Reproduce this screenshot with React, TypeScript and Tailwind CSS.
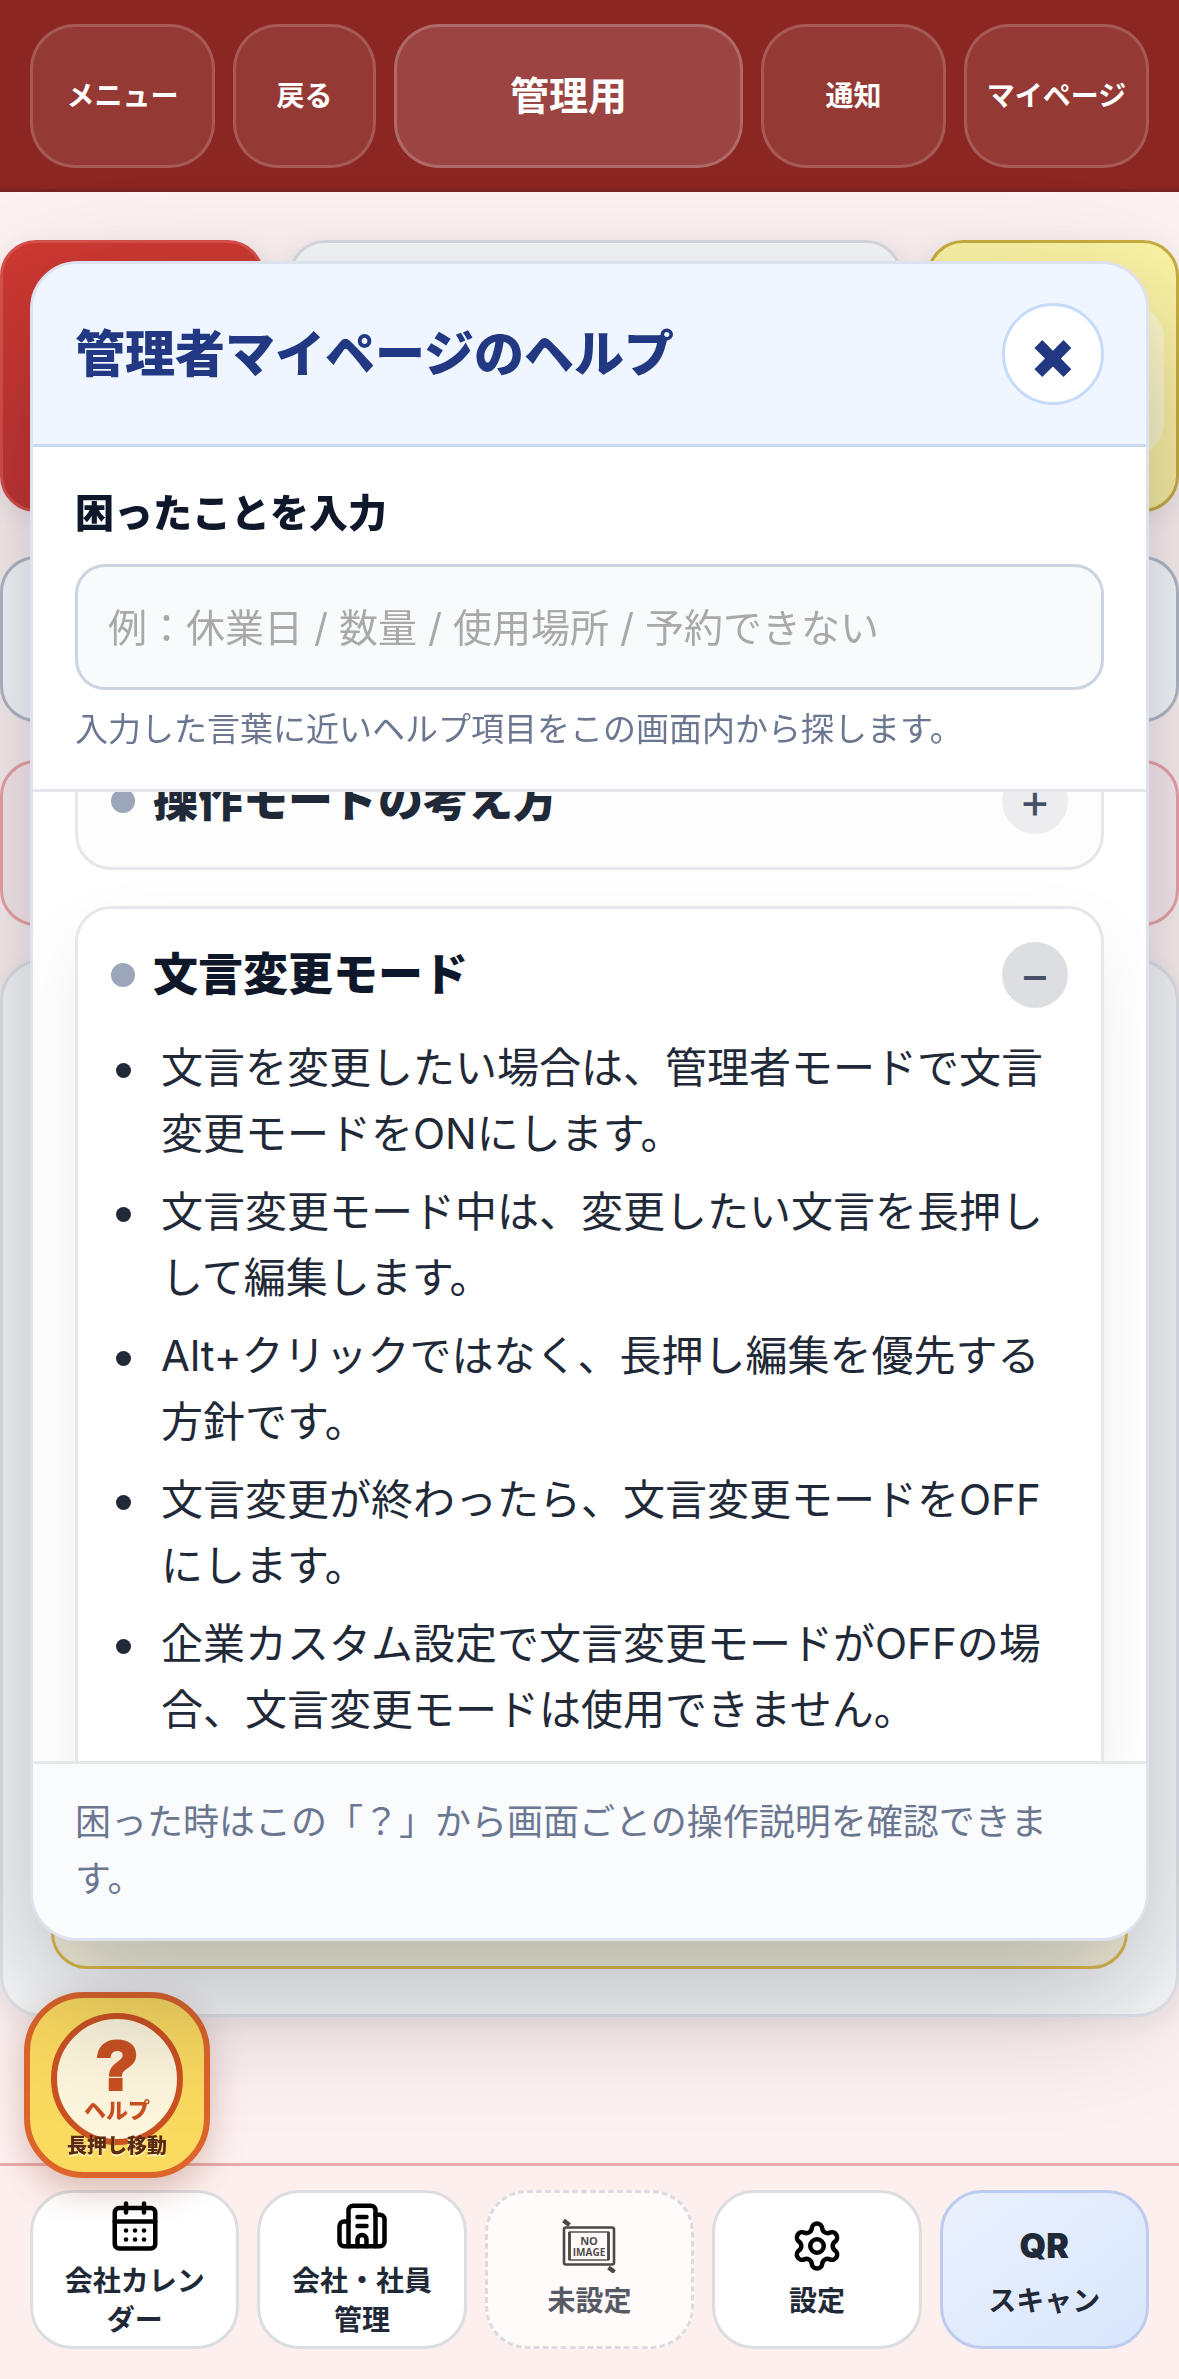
import { useLayoutEffect, useRef, useState } from 'react';
import { Building2, CalendarDays, Settings } from 'lucide-react';

const helpItems = [
    { title: '操作モードの考え方', lines: [] as string[] },
    {
        title: '文言変更モード',
        lines: [
            '文言を変更したい場合は、管理者モードで文言変更モードをONにします。',
            '文言変更モード中は、変更したい文言を長押しして編集します。',
            'Alt+クリックではなく、長押し編集を優先する方針です。',
            '文言変更が終わったら、文言変更モードをOFFにします。',
            '企業カスタム設定で文言変更モードがOFFの場合、文言変更モードは使用できません。',
        ],
    },
];

function NoImageIcon() {
    return (
        <svg viewBox="0 0 54 54" className="size-[54px]" fill="none" stroke="#111" aria-hidden="true">
            <rect x="2" y="8.500" width="50" height="37" rx="2" strokeWidth="2.6" />
            <rect x="7.500" y="13" width="39" height="28" strokeWidth="1.4" />
            <path d="M7.500 13v28M46.500 13v28" strokeWidth="2.8" />
            <path d="M1.500 1.500 7.500 6M46.500 48.500l6 4.500" strokeWidth="4.5" />
            <text x="27" y="26" textAnchor="middle" fill="#111" stroke="none" className="font-['Open_Sans'] text-[11px] font-bold">NO</text>
            <text x="27" y="37" textAnchor="middle" fill="#111" stroke="none" className="font-['Open_Sans'] text-[10px] font-bold">IMAGE</text>
        </svg>
    );
}

function Header() {
    const button = 'rounded-[45px] border-[3px] border-white/16 bg-white/9 text-[28px] font-semibold text-white';
    return (
        <header className="grid h-[192px] grid-cols-[185px_143px_1fr_185px_185px] gap-[18px] border-b-[3px] border-[#7a2320] bg-[#8b2622] px-[30px] pt-6 pb-[21px]">
            <button className={button}>メニュー</button>
            <button className={button}>戻る</button>
            <button className="rounded-[45px] border-[3px] border-white/20 bg-white/14 text-[39px] font-bold text-white">管理用</button>
            <button className={button}>通知</button>
            <button className={button}>マイページ</button>
        </header>
    );
}

// Page behind the dialog, only its edges are visible
function Backdrop() {
    return (
        <main className="pt-[48px]">
            <div className="grid grid-cols-[264px_1fr_252px] gap-[25px]">
                <div className="h-[272px] rounded-[36px] border-[3px] border-[#d8504c] bg-linear-to-b from-[#cf3932] to-[#c53430] shadow-[0_6px_24px_rgba(15,23,42,0.08)]" />
                <div className="rounded-[36px] border-[3px] border-[#d9dbdf] bg-[#f7f8f9] shadow-[0_6px_24px_rgba(15,23,42,0.08)]" />
                <div className="rounded-[36px] border-[3px] border-[#c9ac3f] bg-linear-to-b from-[#fbf3a4] to-[#f8eda0] px-3 pt-[60px] pb-[51px] shadow-[0_6px_24px_rgba(15,23,42,0.08)]">
                    <div className="h-full rounded-[36px] bg-white/40" />
                </div>
            </div>
            <div className="mt-[44px] h-[166px] rounded-[36px] border-[3px] border-[#b4bac8] bg-[#f8fafc]" />
            <div className="mt-[38px] h-[166px] rounded-[36px] border-[3px] border-[#eea5a8] bg-[#fcecef]" />
            <div className="mt-[33px] flex h-[1058px] flex-col justify-end rounded-[42px] border-[3px] border-[#e2e4e9] bg-[#f8f9fa] px-12 pb-[45px] shadow-[0_6px_24px_rgba(15,23,42,0.06)]">
                <div className="h-[240px] rounded-[36px] border-[3px] border-[#e0bd48] bg-[#f7f2dc]" />
            </div>
        </main>
    );
}

function HelpButton() {
    return (
        <button className="fixed bottom-[201px] left-6 flex size-[186px] flex-col items-center rounded-[60px] border-[6px] border-[#dd642b] bg-[#fbda60] pt-[15px] shadow-[0_12px_36px_rgba(124,45,18,0.28)]">
            <span className="flex size-[132px] shrink-0 flex-col items-center justify-center rounded-full border-[6px] border-[#cb5122] bg-[#fdf5dc] text-[#c95022]">
                <span className="font-['Liberation_Sans',sans-serif] text-[69px] leading-[63px] font-bold [-webkit-text-stroke:4px_#c95022]">?</span>
                <span className="text-[22px] leading-[27px] font-black">ヘルプ</span>
            </span>
            <span className="-mt-[11px] text-[20px] leading-6 font-black text-[#5c2a10] [text-shadow:0_2px_0_#fff3b8]">長押し移動</span>
        </button>
    );
}

function BottomNav() {
    const item = 'flex flex-col items-center justify-center gap-[9px] rounded-[42px] border-[3px] px-6 text-[28px] leading-[39px] font-semibold text-[#1f2937]';
    return (
        <nav className="fixed inset-x-0 bottom-0 grid h-[216px] grid-cols-5 gap-[18px] border-t-[3px] border-[#e9abab] bg-[#fdefee] px-[30px] pt-6 pb-[30px]">
            <button className={`${item} border-[#dcdde1] bg-white`}>
                <CalendarDays size={54} className="shrink-0 text-black" />
                会社カレンダー
            </button>
            <button className={`${item} border-[#dcdde1] bg-white`}>
                <Building2 size={54} className="shrink-0 text-black" />
                会社・社員管理
            </button>
            <button className={`${item} border-dashed border-[#d1d5db] bg-white opacity-75`}>
                <NoImageIcon />
                未設定
            </button>
            <button className={`${item} border-[#dcdde1] bg-white`}>
                <Settings size={54} className="text-black" />
                設定
            </button>
            <button className={`${item} border-[#bccbee] bg-linear-to-br from-[#eaf1fe] to-[#d9e6fc]`}>
                <span className="text-[34px] leading-[54px] font-black">QR</span>
                スキャン
            </button>
        </nav>
    );
}

function HelpDialog() {
    const [query, setQuery] = useState('');
    const listRef = useRef<HTMLDivElement>(null);

    useLayoutEffect(() => {
        if (listRef.current) listRef.current.scrollTop = 90;
    }, []);

    return (
        <section
            role="dialog"
            aria-labelledby="help-title"
            className="fixed inset-x-[30px] top-[261px] bottom-[438px] flex flex-col overflow-hidden rounded-[48px] border-[3px] border-[#dde2ee] bg-white shadow-[0_54px_132px_rgba(15,23,42,0.28)]"
        >
            <div className="flex items-center justify-between border-b-[3px] border-[#c9daf5] bg-[#eff6ff] px-[42px] py-[39px]">
                <h1 id="help-title" className="text-[50px] leading-[60px] font-black text-[#233883]">管理者マイページのヘルプ</h1>
                <button className="size-[102px] rounded-full border-[3px] border-[#c5dbf9] bg-white text-[66px] leading-none font-black text-[#233883]">×</button>
            </div>

            <div className="border-b-[3px] border-[#e5e7eb] bg-white px-[42px] pt-[36px] pb-[33px]">
                <label htmlFor="help-query" className="block text-[39px] leading-[60px] font-black text-[#0f172a]">困ったことを入力</label>
                <input
                    id="help-query"
                    value={query}
                    onChange={(e) => setQuery(e.target.value)}
                    placeholder="例：休業日 / 数量 / 使用場所 / 予約できない"
                    className="mt-[21px] block h-[126px] w-full rounded-[30px] border-[3px] border-[#cdd4e1] bg-[#f8fafc] px-[30px] text-[39px] placeholder:text-[#a9a9a9]"
                />
                <p className="mt-3 text-[33px] leading-[54px] text-[#6b7690]">入力した言葉に近いヘルプ項目をこの画面内から探します。</p>
            </div>

            <div ref={listRef} className="flex min-h-0 flex-1 flex-col gap-[36px] overflow-y-auto bg-white px-[42px] py-[30px] [scrollbar-width:none]">
                {helpItems.map((item) => {
                    const isOpen = item.lines.length > 0;
                    return (
                        <article
                            key={item.title}
                            className={`shrink-0 rounded-[36px] border-[3px] border-[#e5e7eb] px-[33px] pt-[33px] ${isOpen ? 'bg-white pb-[48px] shadow-[0_30px_72px_rgba(15,23,42,0.07)]' : 'bg-[#fdfdfe] pb-[33px]'}`}
                        >
                            <div className="flex items-center">
                                <span className="size-6 rounded-full bg-[#9ca6bb]" />
                                <h2 className={`ml-[18px] flex-1 text-[45px] leading-[66px] font-black ${isOpen ? 'text-[#0f172a]' : 'text-[#1f2937]'}`}>{item.title}</h2>
                                <button className={`size-[66px] rounded-full text-[48px] leading-none font-normal text-[#475067] ${isOpen ? 'bg-[#dcdee2]' : 'bg-[#ededf0]'}`}>
                                    {isOpen ? '−' : '+'}
                                </button>
                            </div>
                            {isOpen && (
                                <ul className="mt-[27px] flex flex-col gap-3 text-[42px] leading-[66px] text-[#1f2937]">
                                    {item.lines.map((line) => (
                                        <li key={line} className="flex gap-[30px] pl-[5px]">
                                            <span className="mt-[28px] size-[15px] shrink-0 rounded-full bg-[#1f2937]" />
                                            <span>{line}</span>
                                        </li>
                                    ))}
                                </ul>
                            )}
                        </article>
                    );
                })}
            </div>

            <footer className="border-t-[3px] border-[#e5e7eb] bg-[#f9fbfd] px-[42px] py-[30px] text-[36px] leading-[57px] text-[#6b7690]">
                困った時はこの「？」から画面ごとの操作説明を確認できます。
            </footer>
        </section>
    );
}

export default function App() {
    return (
        <div lang="ja" className="min-h-screen bg-[#fdf2f2] font-['Inter','Noto_Sans_CJK_JP',sans-serif]">
            <Header />
            <Backdrop />
            <BottomNav />
            <HelpButton />
            <HelpDialog />
        </div>
    );
}
